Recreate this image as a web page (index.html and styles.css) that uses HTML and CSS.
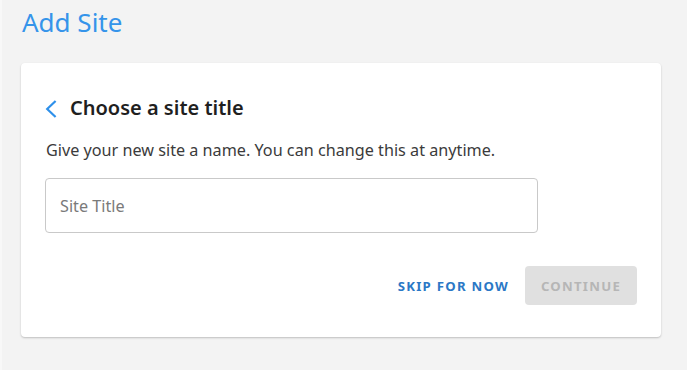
FILE: index.html
```html
<!DOCTYPE html>
<html lang="en">
<head>
<meta charset="utf-8">
<title>Add Site</title>
<link rel="stylesheet" href="styles.css">
</head>
<body>
<main class="page">
  <h1 class="page-title">Add Site</h1>
  <section class="card">
    <div class="card-head">
      <button class="back" type="button" aria-label="Back">
        <svg width="12" height="18" viewBox="0 0 12 18" aria-hidden="true">
          <path d="M10.6 1 L2.2 9 L10.6 17" fill="none" stroke="#2e90ea" stroke-width="2.2" stroke-linecap="butt" stroke-linejoin="miter"/>
        </svg>
      </button>
      <h2 class="card-title">Choose a site title</h2>
    </div>
    <p class="desc">Give your new site a name. You can change this at anytime.</p>
    <input class="field" type="text" placeholder="Site Title">
    <div class="actions">
      <button class="btn-link" type="button">SKIP FOR NOW</button>
      <button class="btn-primary" type="button" disabled>CONTINUE</button>
    </div>
  </section>
</main>
</body>
</html>
```

FILE: styles.css
```css
html, body {
  margin: 0;
  padding: 0;
  background: #f3f3f3;
  font-family: "Noto Sans", "Open Sans", sans-serif;
}

body {
  border-left: 2px solid #f8f8f8;
  min-height: 370px;
  box-sizing: border-box;
}

.page {
  padding: 4px 0 0 19px;
}

.page-title {
  margin: 0 0 23px 1px;
  font-size: 26px;
  line-height: 36px;
  font-weight: 400;
  color: #3594ea;
}

.card {
  width: 640px;
  box-sizing: border-box;
  background: #fff;
  border-radius: 4px;
  box-shadow: 0 1px 2px rgba(0, 0, 0, 0.22);
  padding: 31px 24px 32px 24px;
}

.card-head {
  display: flex;
  align-items: center;
  gap: 13px;
  height: 28px;
}

.back {
  display: flex;
  padding: 0;
  border: 0;
  background: none;
  cursor: pointer;
  margin-top: 1px;
}

.card-title {
  margin: 0;
  font-size: 20px;
  line-height: 28px;
  font-weight: 600;
  color: #1f1f1f;
}

.desc {
  margin: 17px 0 17px 1px;
  font-size: 16.2px;
  line-height: 22px;
  color: #3b3b3b;
}

.field {
  display: block;
  width: 493px;
  height: 55px;
  box-sizing: border-box;
  border: 1px solid #c9c9c9;
  border-radius: 4px;
  padding: 0 14px;
  font-family: inherit;
  font-size: 16.2px;
  color: #333;
  background: #fff;
  outline: none;
}

.field::placeholder {
  color: #7a7a7a;
}

.actions {
  display: flex;
  justify-content: flex-end;
  align-items: center;
  gap: 16px;
  margin-top: 33px;
}

.btn-link,
.btn-primary {
  font-family: inherit;
  font-size: 13.2px;
  font-weight: 700;
  letter-spacing: 1.25px;
  border: 0;
  cursor: pointer;
}

.btn-link {
  background: none;
  color: #2b78c6;
  padding: 0;
}

.btn-primary {
  background: #e0e0e0;
  color: #b6b6b6;
  border-radius: 4px;
  width: 112px;
  height: 39px;
  padding: 0;
}
```
